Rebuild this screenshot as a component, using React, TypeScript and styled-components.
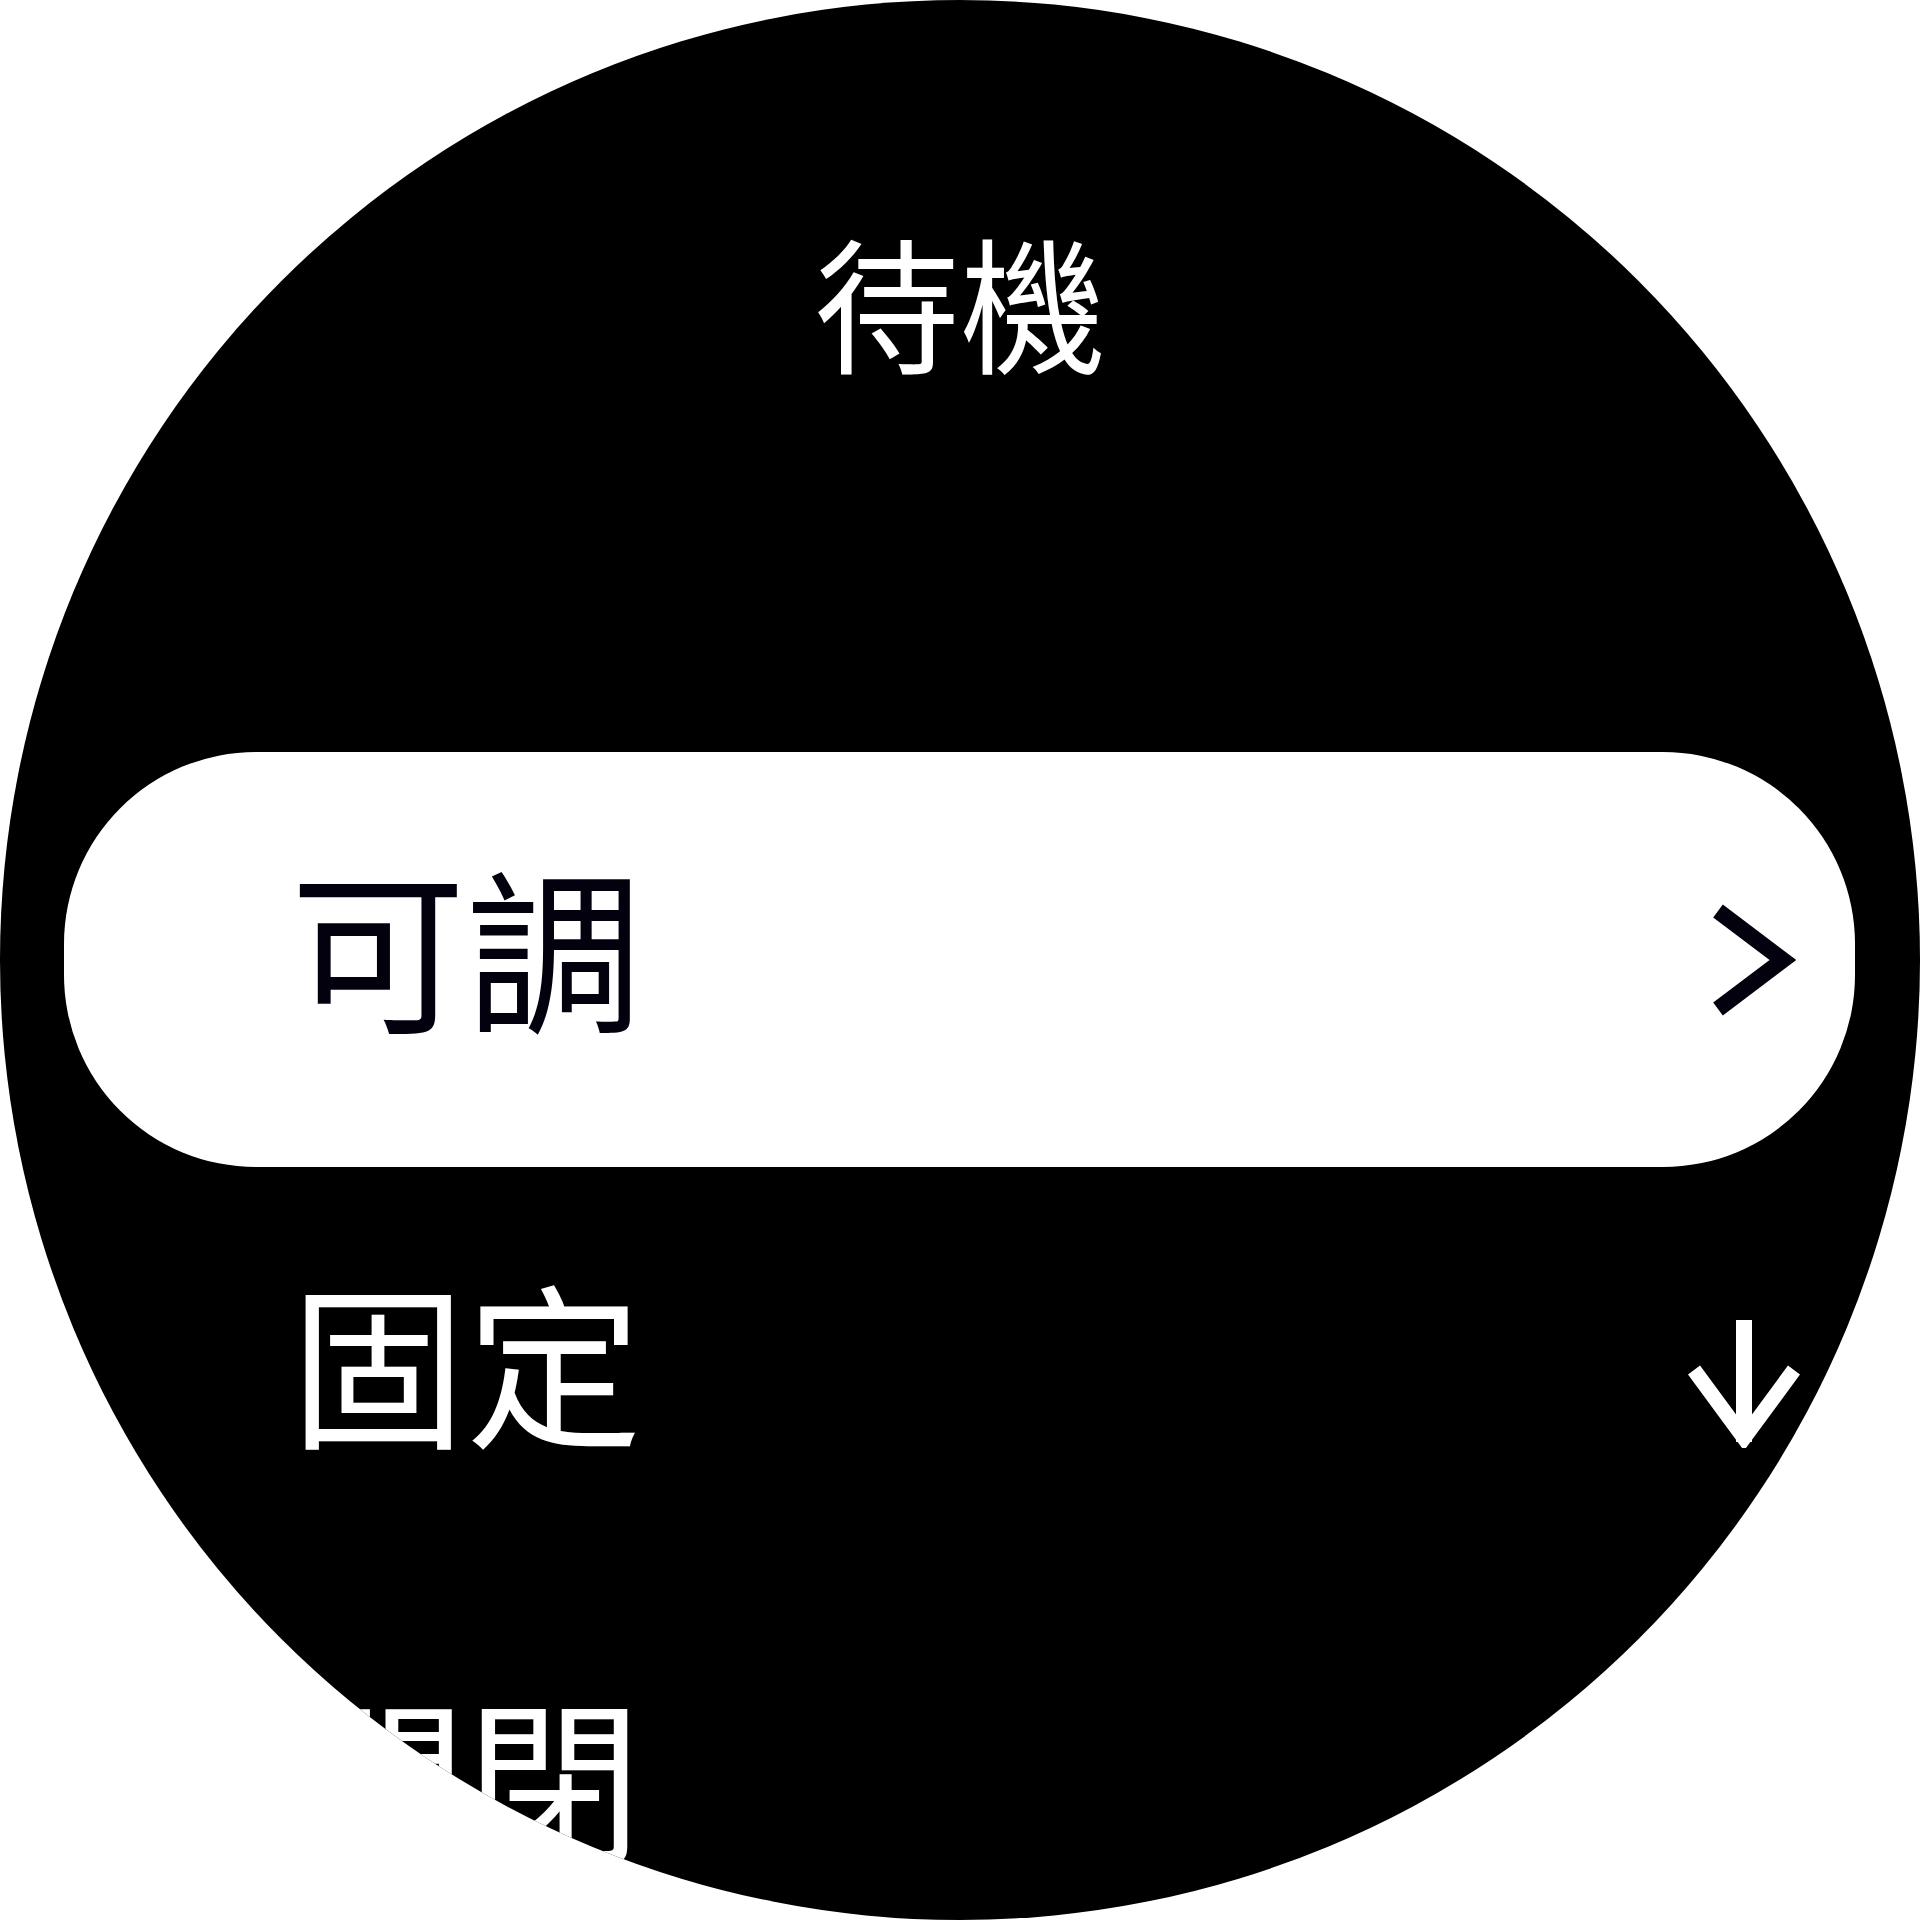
import React from 'react';
import styled, { createGlobalStyle } from 'styled-components';

const GlobalStyle = createGlobalStyle`
  html, body {
    margin: 0;
    padding: 0;
    background: #ffffff;
  }
  #root {
    width: 1920px;
    height: 1920px;
  }
`;

interface Option {
  id: string;
  label: string;
  selected?: boolean;
  icon?: 'chevron' | 'down';
}

const options: Option[] = [
  { id: 'adjustable', label: '可調', selected: true, icon: 'chevron' },
  { id: 'fixed', label: '固定', icon: 'down' },
  { id: 'off', label: '關閉' },
];

const ChevronIcon = () => (
  <svg width="112" height="112" viewBox="0 0 112 112" fill="none">
    <polyline
      points="30,7 95,56 30,105"
      stroke="#04010e"
      strokeWidth="16"
      strokeLinecap="butt"
      strokeLinejoin="miter"
    />
  </svg>
);

const DownIcon = () => (
  <SDownSvg width="112" height="128" viewBox="0 0 112 128" fill="none">
    <line x1="56" y1="0" x2="56" y2="122" stroke="#ffffff" strokeWidth="16" />
    <polyline
      points="6,50 56,118 106,50"
      stroke="#ffffff"
      strokeWidth="15"
      strokeLinejoin="miter"
    />
  </SDownSvg>
);

const App: React.FC = () => {
  return (
    <>
      <GlobalStyle />
      <SWatch>
        <SHeader>
          <STitle>待機</STitle>
        </SHeader>
        <SList>
          {options.map((item) => (
            <SRow key={item.id} selected={item.selected}>
              <SLabel selected={item.selected}>{item.label}</SLabel>
              <SIconSlot>
                {item.icon === 'chevron' && <ChevronIcon />}
                {item.icon === 'down' && <DownIcon />}
              </SIconSlot>
            </SRow>
          ))}
        </SList>
      </SWatch>
    </>
  );
};

const SWatch = styled.div`
  width: 1920px;
  height: 1920px;
  border-radius: 50%;
  background: #000000;
  overflow: hidden;
  display: flex;
  flex-direction: column;
  font-family: 'Noto Sans CJK TC', 'Noto Sans CJK SC', 'Noto Sans', sans-serif;
`;

const SHeader = styled.header`
  flex-shrink: 0;
  height: 752px;
  box-sizing: border-box;
  padding-top: 226px;
  display: flex;
  justify-content: center;
`;

const STitle = styled.h1`
  margin: 0;
  font-size: 146px;
  line-height: 146px;
  font-weight: 400;
  color: #ffffff;
`;

const SList = styled.ul`
  flex-shrink: 0;
  list-style: none;
  margin: 0;
  padding: 0;
  display: flex;
  flex-direction: column;
`;

const SRow = styled.li<{ selected?: boolean }>`
  flex: 0 0 415px;
  height: 415px;
  margin: 0 65px 0 64px;
  box-sizing: border-box;
  padding: 0 55px 0 226px;
  display: flex;
  align-items: center;
  justify-content: space-between;
  border-radius: 192px;
  background: ${({ selected }) => (selected ? '#ffffff' : 'transparent')};
`;

const SLabel = styled.span<{ selected?: boolean }>`
  font-size: 176px;
  line-height: 176px;
  font-weight: 400;
  color: ${({ selected }) => (selected ? '#04010e' : '#ffffff')};
  white-space: nowrap;
  margin-top: -32px;
`;

const SIconSlot = styled.div`
  width: 112px;
  display: flex;
  justify-content: center;
  align-items: center;
`;

const SDownSvg = styled.svg`
  margin-top: 18px;
`;

export default App;
